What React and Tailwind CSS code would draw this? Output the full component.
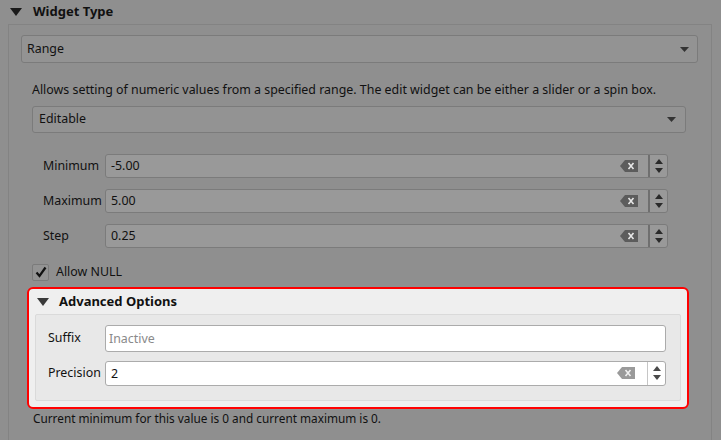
import React from 'react';

const font = { fontFamily: '"Noto Sans", "DejaVu Sans", sans-serif' };

const Caret = ({ className = '' }) => (
  <svg width="12" height="8" viewBox="0 0 12 8" className={className}>
    <path d="M0 0 H12 L6 8 Z" fill="currentColor" />
  </svg>
);

const SmallCaret = () => (
  <svg width="9" height="5" viewBox="0 0 9 5">
    <path d="M0 0 H9 L4.5 5 Z" fill="currentColor" />
  </svg>
);

const ClearIcon = ({ fill }) => (
  <svg width="18" height="12" viewBox="0 0 18 12">
    <path d="M5 0 H18 V12 H5 L0 6 Z" fill={fill} />
    <path d="M8.5 3 L13.5 9 M13.5 3 L8.5 9" stroke="#fff" strokeWidth="1.6" opacity="0.85" />
  </svg>
);

const Spin = ({ color }) => (
  <svg width="10" height="18" viewBox="0 0 10 18">
    <path d="M1 7 L5 2 L9 7 Z" fill={color} />
    <path d="M1 11 L5 16 L9 11 Z" fill={color} />
  </svg>
);

// spin box in the dimmed part of the page
const DimSpin = ({ label, value }) => (
  <div className="flex items-center h-[24px]">
    <span className="w-[62px] text-[12.4px] text-[#111]">{label}</span>
    <div className="flex-1 flex h-full border border-[#7b7b7b] rounded-[3px] bg-[#999999]">
      <span className="flex-1 px-[5px] text-[12.4px] leading-[22px] text-[#111]">{value}</span>
      <div className="flex items-center pr-[10px]">
        <ClearIcon fill="#5c5c5c" />
      </div>
      <div className="w-[19px] border-l-2 border-[#6f6f6f] flex items-center justify-center">
        <Spin color="#2a2a2a" />
      </div>
    </div>
  </div>
);

export default function App() {
  return (
    <div className="w-[721px] h-[440px] overflow-hidden bg-[#8f8f8f] text-[#111]" style={font}>
      {/* Widget Type header */}
      <div className="flex items-center h-[24px] pl-[10px] gap-[11px]">
        <Caret className="text-[#1a1a1a]" />
        <span className="text-[13px] font-bold">Widget Type</span>
      </div>

      <div className="ml-[8px] w-[704px] h-[420px] border-l border-t border-r border-[#838383] pt-[10px] pl-[12px] pr-[13px]">
        {/* Range combo */}
        <div className="flex items-center justify-between h-[28px] border border-[#7b7b7b] rounded-[3px] bg-[#939393] px-[5px]">
          <span className="text-[12.4px]">Range</span>
          <span className="text-[#333] mr-[3px]"><SmallCaret /></span>
        </div>

        <div className="pl-[11px] pr-[12px]">
          <p className="mt-[18px] text-[12.4px] leading-[17px]">
            Allows setting of numeric values from a specified range. The edit widget can be either a slider or a spin box.
          </p>
          <div className="mt-[8px] flex items-center justify-between h-[27px] border border-[#7b7b7b] rounded-[3px] bg-[#939393] px-[6px]">
            <span className="text-[12.4px]">Editable</span>
            <span className="text-[#333] mr-[3px]"><SmallCaret /></span>
          </div>

          <div className="mt-[21px] pl-[11px] pr-[18px] flex flex-col gap-[11px]">
            <DimSpin label="Minimum" value="-5.00" />
            <DimSpin label="Maximum" value="5.00" />
            <DimSpin label="Step" value="0.25" />
          </div>

          <div className="mt-[15px] flex items-center gap-[7px]">
            <div className="w-[17px] h-[17px] border border-[#7b7b7b] rounded-[2px] bg-[#939393] flex items-center justify-center">
              <svg width="12" height="12" viewBox="0 0 12 12">
                <path d="M1.5 6.5 L4.5 10 L10.5 1.5" stroke="#111" strokeWidth="2.2" fill="none" />
              </svg>
            </div>
            <span className="text-[12.4px]">Allow NULL</span>
          </div>
        </div>

        {/* Advanced Options highlighted */}
        <div className="mt-[5px] ml-[6px] w-[662px] h-[122px] border-2 border-[#ff0000] rounded-[6px] bg-[#efefef] pt-[3px] px-[6px]">
          <div className="flex items-center h-[20px] pl-[2px] gap-[10px]">
            <Caret className="text-[#3a3a3a]" />
            <span className="text-[13px] font-bold text-[#111]">Advanced Options</span>
          </div>
          <div className="mt-[2px] h-[87px] border border-[#dadada] rounded-[2px] bg-[#e8e8e8] pt-[10px] pl-[12px] pr-[14px]">
            <div className="flex items-center h-[27px]">
              <span className="w-[57px] text-[12.4px]">Suffix</span>
              <div className="flex-1 h-full border border-[#ababab] rounded-[3px] bg-white px-[3px] text-[12.4px] leading-[25px] text-[#8a8a8a]">
                Inactive
              </div>
            </div>
            <div className="mt-[9px] flex items-center h-[25px]">
              <span className="w-[57px] text-[12.4px]">Precision</span>
              <div className="flex-1 flex h-full border border-[#ababab] rounded-[3px] bg-white">
                <span className="flex-1 px-[5px] text-[12.4px] leading-[23px]">2</span>
                <div className="flex items-center pr-[12px]">
                  <ClearIcon fill="#9a9a9a" />
                </div>
                <div className="w-[18px] border-l border-[#c6c6c6] flex items-center justify-center">
                  <Spin color="#4a4a4a" />
                </div>
              </div>
            </div>
          </div>
        </div>

        <p className="mt-[1px] pl-[12px] text-[11.8px] leading-[17px]">
          Current minimum for this value is 0 and current maximum is 0.
        </p>
      </div>
    </div>
  );
}
